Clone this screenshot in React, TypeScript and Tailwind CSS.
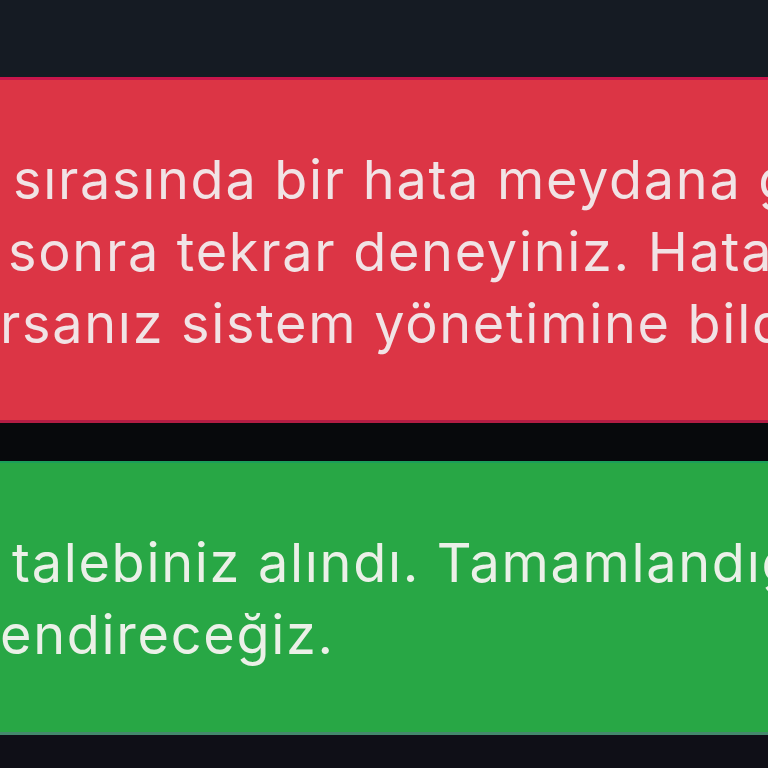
import React from 'react';

type Line = { cut: string; clip: string; text: string };

const errorLines: Line[] = [
  { cut: 'İşlem ', clip: 'w-[13px]', text: 'sırasında bir hata meydana geldi. Lütfen daha' },
  { cut: 'daha ', clip: 'w-[8px]', text: 'sonra tekrar deneyiniz. Hata ile tekrar' },
  { cut: 'karşılaşı', clip: 'w-[0px]', text: 'rsanız sistem yönetimine bildiriniz.' },
];

const successLines: Line[] = [
  { cut: 'Destek ', clip: 'w-[12px]', text: 'talebiniz alındı. Tamamlandığında sizi' },
  { cut: 'bilgil', clip: 'w-[0px]', text: 'endireceğiz.' },
];

// each visible row starts mid-sentence, so the hidden prefix is pushed out to the left
const AlertLine = ({ line }: { line: Line }) => (
  <div className="flex whitespace-pre">
    <span className={`flex shrink-0 justify-end overflow-hidden ${line.clip}`}>
      <span>{line.cut}</span>
    </span>
    <span>{line.text}</span>
  </div>
);

export default function App() {
  return (
    <div
      className="h-[768px] w-[768px] overflow-hidden bg-[#07090c] text-[54px] leading-[72px] tracking-[1.7px]"
      style={{ fontFamily: 'Inter, "Noto Sans", sans-serif' }}
    >
      <div className="h-[77px] bg-[#151b23]" />

      <div className="h-[346px] border-t-[3px] border-b-[3px] border-t-[#c8164b] border-b-[#b31d44] bg-[#dc3545] pt-[64px] text-[#f1e3e5]">
        {errorLines.map((l, i) => (
          <AlertLine key={i} line={l} />
        ))}
      </div>

      <div className="h-[38px]" />

      <div className="h-[274px] border-t-[2px] border-b-[3px] border-t-[#1b9f5a] border-b-[#44896c] bg-[#28a745] pt-[64px] text-[#ebf0e8]">
        {successLines.map((l, i) => (
          <AlertLine key={i} line={l} />
        ))}
      </div>

      <div className="h-[33px] bg-[#0f0f17]" />
    </div>
  );
}
